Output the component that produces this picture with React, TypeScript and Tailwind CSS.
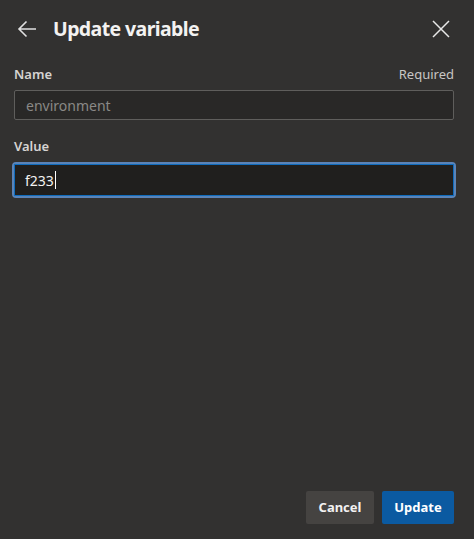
import React from "react";

export default function App() {
  return (
    <div
      className="w-[474px] h-[539px] bg-[#323130] flex flex-col text-white"
      style={{ fontFamily: '"Noto Sans", "Open Sans", sans-serif' }}
    >
      <div className="flex items-center h-[58px] pl-[17px] pr-[24px]">
        <svg width="20" height="20" viewBox="0 0 20 20" className="text-[#e0e0e0]">
          <path d="M19 10H2M9.5 2.5L2 10l7.5 7.5" fill="none" stroke="currentColor" strokeWidth="1.6" />
        </svg>
        <div className="ml-[16px] text-[19.5px] font-bold tracking-[-0.6px] text-[#f3f2f1] leading-none">Update variable</div>
        <div className="flex-1" />
        <svg width="18" height="18" viewBox="0 0 18 18" className="text-[#e8e8e8]">
          <path d="M1 1L17 17M17 1L1 17" fill="none" stroke="currentColor" strokeWidth="1.5" />
        </svg>
      </div>
      <div className="pl-[14px] pr-[20px] flex flex-col">
        <div className="flex justify-between items-end h-[23px] mt-[3px] text-[13px] font-semibold text-[#d6d4d2]">
          <span>Name</span>
          <span className="text-[#c8c6c4] font-normal">Required</span>
        </div>
        <div className="mt-[6px] h-[30px] border border-[#5f5e5c] bg-[#292827] rounded-[2px] flex items-center px-[11px] text-[14px] text-[#8a8886]">
          environment
        </div>
        <div className="mt-[16px] h-[20px] flex items-end text-[13px] font-semibold text-[#d6d4d2]">Value</div>
        <div className="mt-[6px] -mx-[2px] h-[36px] rounded-[4px] border-2 border-[#5b84b8] p-0">
          <div className="h-full border border-[#0f6cbd] bg-[#201f1e] flex items-center px-[10px] text-[14px] text-[#f3f2f1]">
            f233<span className="inline-block w-[1px] h-[18px] bg-white ml-[1px]" />
          </div>
        </div>
      </div>
      <div className="flex-1" />
      <div className="flex justify-end gap-[8px] px-[20px] pb-[15px]">
        <button className="h-[33px] w-[68px] rounded-[2px] bg-[#454341] text-[13px] font-bold text-[#f3f2f1]">Cancel</button>
        <button className="h-[33px] w-[72px] rounded-[2px] bg-[#0b5aa1] text-[13px] font-bold text-white">Update</button>
      </div>
    </div>
  );
}
